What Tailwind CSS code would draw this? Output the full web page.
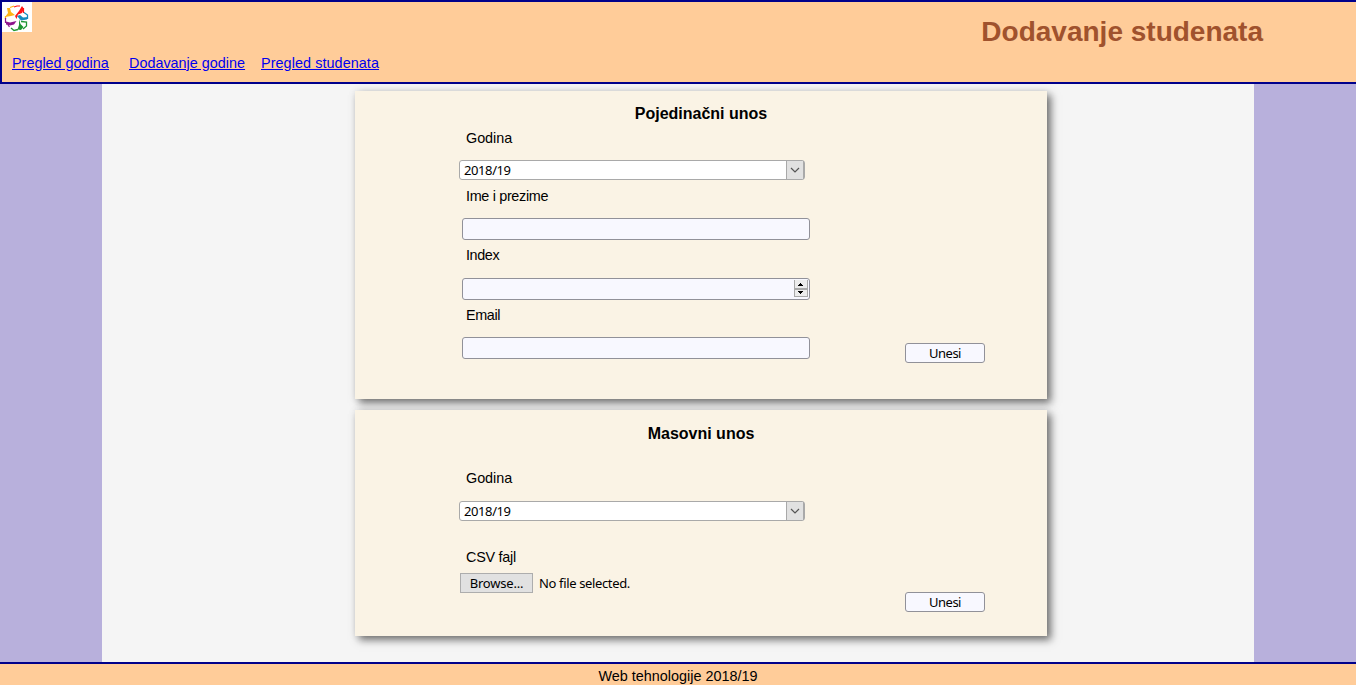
<!DOCTYPE html>
<html lang="bs">
<head>
<meta charset="utf-8">
<title>Dodavanje studenata</title>
<script src="https://cdn.jsdelivr.net/npm/@tailwindcss/browser@4"></script>
</head>
<body class="flex h-[685px] w-[1356px] flex-col overflow-hidden bg-[#b8b0dc] font-['Liberation_Sans',Arial,sans-serif] text-[14.4px] leading-4 text-black">
<header class="flex h-[84px] shrink-0 justify-between border-y-2 border-l-2 border-[#00008b] bg-[#ffcc99]">
  <div class="flex flex-col">
    <svg class="h-[30px] w-[30px] bg-white" viewBox="0 0 30 30" fill="none">
      <path d="M5 6L8 6L9 10L13 13L9 14L3 15L6 11Z" fill="#ffb414"/>
      <path d="M8 5.500L12 4M3.500 14V17" stroke="#ffb414" stroke-width="1.300"/>
      <path d="M20 4L22 7L20 11L16 12.500L14.500 17L13 14L17 9Z" fill="#ff1414"/>
      <path d="M12 5L15 4H18M21.500 6V11" stroke="#ff1414" stroke-width="1.200"/>
      <path d="M15 14L18 13L21 15.500L26 15L25 17.500L19 18.500Z" fill="#148cbe"/>
      <path d="M22 10.500L25.500 13V17" stroke="#148cbe" stroke-width="1.300"/>
      <path d="M4 19.500L8 20.500L14.500 19L12 22.500L8 23.500L4 22.500Z" fill="#8c148c"/>
      <path d="M3.500 16V21M6 23L7.500 25" stroke="#8c148c" stroke-width="1.200"/>
      <path d="M17 17L18.500 22L21.500 25L19 28L15.500 27.500L17 23Z" fill="#1e9632"/>
      <path d="M19 19.500L24.500 20V24L21 27M9 26L12 28.500L16 27.500" stroke="#1e9632" stroke-width="1.300"/>
    </svg>
    <nav class="mt-[23px] ml-[10px] flex text-[#0000ee] underline">
      <a class="w-[117px] whitespace-nowrap">Pregled godina</a>
      <a class="w-[132px] whitespace-nowrap">Dodavanje godine</a>
      <a class="tracking-[0.07px] whitespace-nowrap">Pregled studenata</a>
    </nav>
  </div>
  <h1 class="mt-[14px] mr-[93px] text-[28px] leading-8 font-bold text-[#a0522d]">Dodavanje studenata</h1>
</header>

<main class="mx-[102px] flex h-[578px] shrink-0 flex-col gap-[11px] bg-[#f5f5f5] pt-[7px] pl-[253px]">
  <section class="flex h-[308px] w-[692px] flex-col bg-[#faf3e5] pt-[14px] shadow-[4px_4px_8px_rgba(0,0,0,0.53),0_0_8px_rgba(0,0,0,0.08)]">
    <h2 class="text-center text-[16px] leading-[18px] font-bold">Pojedinačni unos</h2>
    <div class="flex">
      <div class="w-[550px] pl-[104px]">
        <p class="mt-[7px] ml-[7px] tracking-[-0.05px]">Godina</p>
        <div class="mt-[14px] flex h-5 w-[346px] rounded-[3px] border border-[#a9a9a9] bg-white font-['Noto_Sans',sans-serif] text-[13px] leading-[19px]">
          <span class="flex-1 pl-1 tracking-[-0.4px]">2018/19</span>
          <span class="flex w-[18px] items-center justify-center border-x border-[#a9a9a9] bg-[#e1e1e1]"><svg class="h-[6px] w-[10px]" viewBox="0 0 10 6" fill="none" stroke="#555" stroke-width="1.2"><path d="M1 1l4 4 4-4"/></svg></span>
        </div>
        <p class="mt-[8px] ml-[7px] tracking-[-0.33px]">Ime i prezime</p>
        <div class="mt-[14px] ml-[3px] h-[22px] w-[348px] rounded-[3px] border border-[#919199] bg-[#f8f8ff]"></div>
        <p class="mt-[7px] ml-[7px] tracking-[-0.4px]">Index</p>
        <div class="mt-[15px] ml-[3px] flex h-[22px] w-[348px] items-start justify-end rounded-[3px] border border-[#919199] bg-[#f8f8ff] pt-px pr-px">
          <svg class="h-[17px] w-[14px]" viewBox="0 0 14 17" shape-rendering="crispEdges"><path d="M0 0h14v17H0z" fill="#a9a9a9"/><path d="M1 0h12v8H1zM1 10h12v6H1z" fill="#ececec"/><path d="M6 3h1v1h1v1h1v1H4V5h1V4h1zM4 11h5v1H8v1H7v1H6v-1H5v-1H4z"/></svg>
        </div>
        <p class="mt-[7px] ml-[7px] tracking-[-0.4px]">Email</p>
        <div class="mt-[14px] ml-[3px] h-[22px] w-[348px] rounded-[3px] border border-[#919199] bg-[#f8f8ff]"></div>
      </div>
      <button class="mb-[-4px] h-5 w-20 self-end rounded-[3px] border border-[#919199] bg-[#f8f8ff] font-['Noto_Sans',sans-serif] text-[13px] leading-[19px] tracking-[-0.5px]">Unesi</button>
    </div>
  </section>

  <section class="flex h-[226px] w-[692px] flex-col bg-[#faf3e5] pt-[15px] shadow-[4px_4px_8px_rgba(0,0,0,0.53),0_0_8px_rgba(0,0,0,0.08)]">
    <h2 class="text-center text-[16px] leading-[18px] font-bold">Masovni unos</h2>
    <div class="flex">
      <div class="w-[550px] pl-[104px]">
        <p class="mt-[27px] ml-[7px] tracking-[-0.05px]">Godina</p>
        <div class="mt-[15px] flex h-5 w-[346px] rounded-[3px] border border-[#a9a9a9] bg-white font-['Noto_Sans',sans-serif] text-[13px] leading-[19px]">
          <span class="flex-1 pl-1 tracking-[-0.4px]">2018/19</span>
          <span class="flex w-[18px] items-center justify-center border-x border-[#a9a9a9] bg-[#e1e1e1]"><svg class="h-[6px] w-[10px]" viewBox="0 0 10 6" fill="none" stroke="#555" stroke-width="1.2"><path d="M1 1l4 4 4-4"/></svg></span>
        </div>
        <p class="mt-[28px] ml-[7px] tracking-[-0.25px]">CSV fajl</p>
        <div class="mt-[8px] ml-px flex h-5 font-['Noto_Sans',sans-serif] text-[13px] leading-[19px]">
          <span class="w-[73px] border border-[#adadad] bg-[#e1e1e1] text-center tracking-[-0.2px]">Browse...</span>
          <span class="ml-[6px] pt-px tracking-[-0.36px]">No file selected.</span>
        </div>
      </div>
      <button class="mb-[-19px] h-5 w-20 self-end rounded-[3px] border border-[#919199] bg-[#f8f8ff] font-['Noto_Sans',sans-serif] text-[13px] leading-[19px] tracking-[-0.5px]">Unesi</button>
    </div>
  </section>
</main>

<footer class="h-[23px] shrink-0 border-t-2 border-[#00008b] bg-[#ffcc99] pt-1 text-center">Web tehnologije 2018/19</footer>
</body>
</html>
